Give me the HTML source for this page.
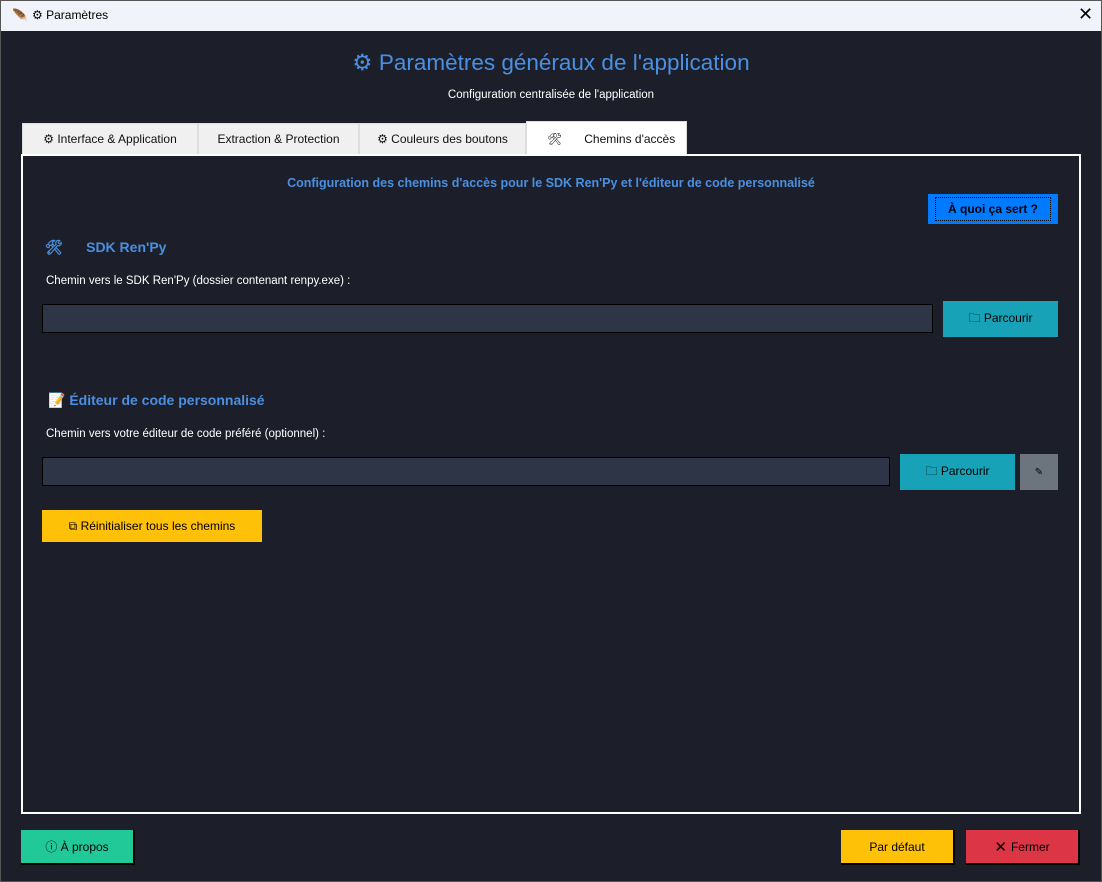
<!DOCTYPE html>
<html><head><meta charset="utf-8"><style>
*{margin:0;padding:0;box-sizing:border-box}
body{width:1102px;height:882px;background:#1c1f2a;font-family:"Liberation Sans","DejaVu Sans",sans-serif;position:relative;overflow:hidden}
.a{position:absolute}
.tb{left:0;top:0;width:1102px;height:31px;background:#f0f3f9;font-size:12px;color:#000}
.tab{top:123px;height:32px;background:#f0f0f0;border:1px solid #ddd;font-size:12px;color:#111;display:flex;align-items:center;justify-content:center}
.btn{display:flex;align-items:center;justify-content:center;font-size:12px;color:#000}
.inp{background:#2d3546;border:1px solid #000}
.lbl{font-size:11.5px;color:#fff}
.h{color:#4a8fe0;font-weight:bold;font-size:14px}
</style></head><body>
<div class="a" style="inset:0;border:1px solid #555;pointer-events:none;z-index:9"></div>
<div class="a tb"><span class="a" style="left:12px;top:8px;font-size:13px">🪶</span><span class="a" style="left:32px;top:8px">⚙ Paramètres</span><span class="a" style="left:1078px;top:4px;font-size:18px">✕</span></div>
<div class="a" style="left:0;top:50px;width:1102px;text-align:center;color:#4a8fe0;font-size:22.5px">⚙ Paramètres généraux de l'application</div>
<div class="a" style="left:0;top:89px;width:1102px;text-align:center;color:#fff;font-size:11.5px">Configuration centralisée de l'application</div>
<div class="a tab" style="left:22px;width:176px">⚙ Interface &amp; Application</div>
<div class="a tab" style="left:198px;width:161px">Extraction &amp; Protection</div>
<div class="a tab" style="left:359px;width:167px">⚙ Couleurs des boutons</div>
<div class="a tab" style="left:526px;top:121px;height:35px;width:161px;background:#fff;justify-content:flex-start;padding-left:20px">🛠<span style="margin-left:22px">Chemins d'accès</span></div>
<div class="a" style="left:21px;top:154px;width:1060px;height:660px;border:2px solid #fff"></div>
<div class="a h" style="left:0;top:176px;width:1102px;text-align:center;font-size:12.5px">Configuration des chemins d'accès pour le SDK Ren'Py et l'éditeur de code personnalisé</div>
<div class="a btn" style="left:928px;top:194px;width:130px;height:30px;background:#007bff;font-weight:bold"><span style="border:1px dotted #000;padding:4px 12px">À quoi ça sert ?</span></div>
<div class="a h" style="left:45px;top:239px">🛠&nbsp;&nbsp;&nbsp;&nbsp;&nbsp;&nbsp;SDK Ren'Py</div>
<div class="a lbl" style="left:46px;top:275px">Chemin vers le SDK Ren'Py (dossier contenant renpy.exe) :</div>
<div class="a inp" style="left:42px;top:304px;width:891px;height:29px"></div>
<div class="a btn" style="left:943px;top:301px;width:115px;height:36px;background:#17a2b8">🗀 Parcourir</div>
<div class="a h" style="left:48px;top:392px">📝 Éditeur de code personnalisé</div>
<div class="a lbl" style="left:46px;top:428px">Chemin vers votre éditeur de code préféré (optionnel) :</div>
<div class="a inp" style="left:42px;top:457px;width:848px;height:29px"></div>
<div class="a btn" style="left:900px;top:454px;width:115px;height:36px;background:#17a2b8">🗀 Parcourir</div>
<div class="a btn" style="left:1020px;top:454px;width:38px;height:36px;background:#6c757d;font-size:10px">✎</div>
<div class="a btn" style="left:42px;top:510px;width:220px;height:32px;background:#ffc107">⧉ Réinitialiser tous les chemins</div>
<div class="a btn" style="left:21px;top:830px;width:114px;height:35px;background:#20c997;border-bottom:2px solid #000;border-right:2px solid #000">ⓘ À propos</div>
<div class="a btn" style="left:841px;top:830px;width:114px;height:35px;background:#ffc107;border-bottom:2px solid #000;border-right:2px solid #000">Par défaut</div>
<div class="a btn" style="left:966px;top:830px;width:114px;height:35px;background:#dc3545;border-bottom:2px solid #000;border-right:2px solid #000"><b style="font-size:15px;margin-right:4px">✕</b>Fermer</div>
</body></html>
